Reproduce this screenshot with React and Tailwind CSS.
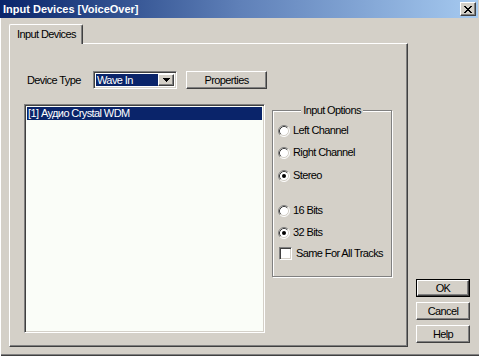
import React from "react";

const sunken =
  "border border-t-[#808080] border-l-[#808080] border-b-white border-r-white shadow-[inset_1px_1px_0_#404040,inset_-1px_-1px_0_#d4d0c8]";
const raised =
  "border border-t-white border-l-white border-r-[#404040] border-b-[#404040] shadow-[inset_-1px_-1px_0_#808080]";

function RadioIcon({ checked }) {
  return (
    <svg width="12" height="12" viewBox="0 0 12 12" className="shrink-0">
      <circle cx="6" cy="6" r="5" fill="#fff" />
      <path d="M2.11 9.89 A5.5 5.5 0 0 1 9.89 2.11" stroke="#808080" fill="none" />
      <path d="M9.89 2.11 A5.5 5.5 0 0 1 2.11 9.89" stroke="#ffffff" fill="none" />
      <path d="M2.82 9.18 A4.5 4.5 0 0 1 9.18 2.82" stroke="#404040" fill="none" />
      <path d="M9.18 2.82 A4.5 4.5 0 0 1 2.82 9.18" stroke="#d4d0c8" fill="none" />
      {checked && <circle cx="6" cy="6" r="2" fill="#000" />}
    </svg>
  );
}

function Radio({ checked, label, className }) {
  return (
    <div className={"flex items-center h-[13px] pl-[5px] " + (className || "")}>
      <RadioIcon checked={checked} />
      <span className="ml-[3px] leading-[13px] whitespace-nowrap">{label}</span>
    </div>
  );
}

function Btn({ children, def }) {
  if (def) {
    return (
      <div className="w-[54px] h-[18px] border border-black">
        <div className={"w-full h-full flex items-center justify-center " + raised}>
          {children}
        </div>
      </div>
    );
  }
  return (
    <div className={"w-[54px] h-[18px] flex items-center justify-center " + raised}>
      {children}
    </div>
  );
}

export default function App() {
  return (
    <div className="w-[479px] h-[356px] bg-[#d4d0c8] flex flex-col overflow-hidden text-[11px] text-black font-['Liberation_Sans',Arial,sans-serif] leading-[13px] tracking-[-0.6px] whitespace-nowrap shadow-[inset_1px_0_0_#fff,inset_0_-1px_0_#404040,inset_0_-2px_0_#808080]">
      {/* Title bar */}
      <div className="h-[18px] mr-[1px] flex items-center pl-[3px] pr-[2px] bg-linear-to-r from-[#0a246a] via-[#5f80b8] to-[#a6caf0]">
        <span className="text-white font-bold text-[11px] tracking-normal flex-1">Input Devices [VoiceOver]</span>
        <div className={"w-[16px] h-[14px] flex items-center justify-center bg-[#d4d0c8] " + raised}>
          <svg width="8" height="7" viewBox="0 0 8 7" shapeRendering="crispEdges">
            <path
              fill="#000"
              d="M0 0h2v1H0zM6 0h2v1H6zM1 1h2v1H1zM5 1h2v1H5zM2 2h4v1H2zM3 3h2v1H3zM2 4h4v1H2zM1 5h2v1H1zM5 5h2v1H5zM0 6h2v1H0zM6 6h2v1H6z"
            />
          </svg>
        </div>
      </div>

      {/* Body */}
      <div className="flex-1 flex pt-[6px] pl-[9px] pb-[9px]">
        {/* Tab control */}
        <div className="w-[399px] flex flex-col">
          <div className="flex h-[19px]">
            <div className="relative z-10 w-[74px] h-[20px] bg-[#d4d0c8] border-t border-l border-r border-t-white border-l-white border-r-[#404040] shadow-[inset_-1px_0_0_#808080] rounded-t-[2px] pl-[7px] pt-[3px]">
              Input Devices
            </div>
          </div>
          <div className="flex-1 border border-t-white border-l-white border-r-[#404040] border-b-[#404040] shadow-[inset_-1px_-1px_0_#808080] pt-[27px] flex flex-col">
            {/* Device type row */}
            <div className="flex items-center h-[18px] pl-[17px]">
              <span className="w-[66px]">Device Type</span>
              <div className={"w-[84px] h-[18px] flex p-[2px] bg-white " + sunken}>
                <div className="flex-1 bg-[#0a246a] text-white pl-[1px] flex items-center">Wave In</div>
                <div className={"w-[16px] h-full flex items-center justify-center bg-[#d4d0c8] " + raised}>
                  <svg width="7" height="4" viewBox="0 0 7 4" shapeRendering="crispEdges">
                    <path fill="#000" d="M0 0h7v1H0zM1 1h5v1H1zM2 2h3v1H2zM3 3h1v1H3z" />
                  </svg>
                </div>
              </div>
              <div className={"ml-[9px] w-[81px] h-[18px] flex items-center justify-center " + raised}>
                Properties
              </div>
            </div>

            {/* List + options */}
            <div className="flex mt-[15px] pl-[14px]">
              <div className={"w-[241px] h-[229px] bg-[#fafdf8] p-[2px] " + sunken}>
                <div className="h-[13px] bg-[#0a246a] text-white pl-[1px] flex items-center">
                  [1] Аудио Crystal WDM
                </div>
              </div>

              <div className="ml-[7px] mt-[6px] w-[120px] h-[167px] border border-[#808080] shadow-[inset_1px_1px_0_#fff,1px_1px_0_#fff] flex flex-col">
                <span className="self-center -mt-[7px] h-[13px] px-[2px] bg-[#d4d0c8] leading-[13px]">
                  Input Options
                </span>
                <Radio className="mt-[7px]" label="Left Channel" />
                <Radio className="mt-[9px]" label="Right Channel" />
                <Radio className="mt-[10px]" checked label="Stereo" />
                <Radio className="mt-[22px]" label="16 Bits" />
                <Radio className="mt-[9px]" checked label="32 Bits" />
                <div className="mt-[8px] flex items-center h-[13px] pl-[6px]">
                  <div className={"w-[13px] h-[13px] bg-white shrink-0 " + sunken} />
                  <span className="ml-[4px]">Same For All Tracks</span>
                </div>
              </div>
            </div>
          </div>
        </div>

        {/* Buttons */}
        <div className="ml-[8px] mb-[4px] self-end flex flex-col gap-[5px]">
          <Btn def>OK</Btn>
          <Btn>Cancel</Btn>
          <Btn>Help</Btn>
        </div>
      </div>
    </div>
  );
}
